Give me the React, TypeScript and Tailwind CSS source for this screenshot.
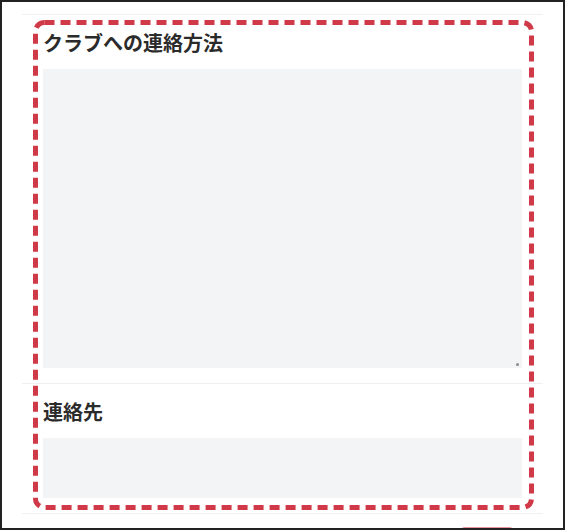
const FONT = "font-['Noto_Sans_CJK_JP','Noto_Sans',sans-serif]";

function Field({ title, height, grip }: { title: string; height: string; grip?: boolean }) {
  return (
    <section className="flex flex-col gap-[12px] border-t border-[#f0f0f2] px-[21px] pt-[14px] pb-[15px]">
      <h2 className="text-[20px] leading-[28px] font-bold text-[#2b2b2b]">{title}</h2>
      <div className={`relative w-full bg-[#f3f4f6] ${height}`}>
        {grip && <span className="absolute right-[3px] bottom-[2px] h-[3px] w-[3px] rounded-full bg-[#8a8a8a]" />}
      </div>
    </section>
  );
}

export default function App() {
  return (
    <div className={`relative h-[530px] w-[565px] overflow-hidden border-2 border-[#222] bg-white ${FONT}`}>
      <div className="mt-[12px] flex flex-col px-[20px]">
        <Field title="クラブへの連絡方法" height="h-[299px]" grip />
        <Field title="連絡先" height="h-[60px]" />
        <div className="border-t border-[#f0f0f2] pt-[13px]">
          <div className="flex justify-end pr-[28px]">
            <button className="h-[36px] w-[56px] rounded-[6px] bg-[#e8929c]" />
          </div>
        </div>
      </div>

      {/* highlight frame drawn over the form */}
      <svg className="pointer-events-none absolute top-[18px] left-[31px]" width="501" height="490" viewBox="0 0 501 490">
        <rect
          x="2.5"
          y="2.5"
          width="496"
          height="485"
          rx="9"
          fill="none"
          stroke="#d03a48"
          strokeWidth="5"
          strokeDasharray="10 6"
        />
      </svg>
    </div>
  );
}
